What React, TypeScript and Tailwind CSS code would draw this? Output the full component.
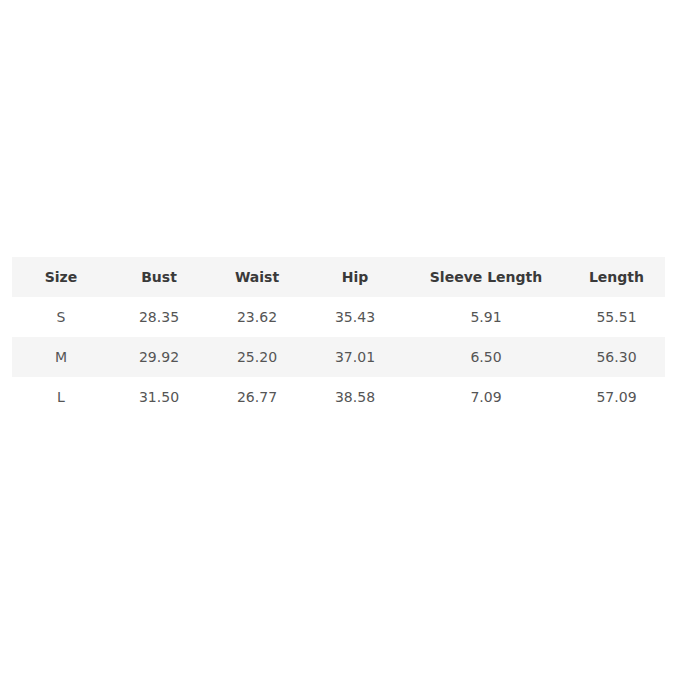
const headers = ['Size', 'Bust', 'Waist', 'Hip', 'Sleeve Length', 'Length'];
const widths = ['w-[98px]', 'w-[98px]', 'w-[98px]', 'w-[98px]', 'w-[164px]', 'w-[97px]'];

const rows = [
  ['S', '28.35', '23.62', '35.43', '5.91', '55.51'],
  ['M', '29.92', '25.20', '37.01', '6.50', '56.30'],
  ['L', '31.50', '26.77', '38.58', '7.09', '57.09'],
];

export default function App() {
  return (
    <div
      className="min-h-[678px] w-full bg-white pt-[257px] pl-[12px]"
      style={{ fontFamily: '"DejaVu Sans", Verdana, sans-serif' }}
    >
      <table className="border-collapse text-[14px]">
        <thead>
          <tr className="bg-[#f5f5f5] h-[40px]">
            {headers.map((h, i) => (
              <th key={h} className={`${widths[i]} text-center font-bold text-[#3a3a3a] p-0`}>
                {h}
              </th>
            ))}
          </tr>
        </thead>
        <tbody>
          {rows.map((row, r) => (
            <tr key={row[0]} className={r % 2 === 1 ? 'bg-[#f5f5f5] h-[40px]' : 'bg-white h-[40px]'}>
              {row.map((cell, i) => (
                <td key={i} className={`${widths[i]} text-center text-[#555555] p-0`}>
                  {cell}
                </td>
              ))}
            </tr>
          ))}
        </tbody>
      </table>
    </div>
  );
}
